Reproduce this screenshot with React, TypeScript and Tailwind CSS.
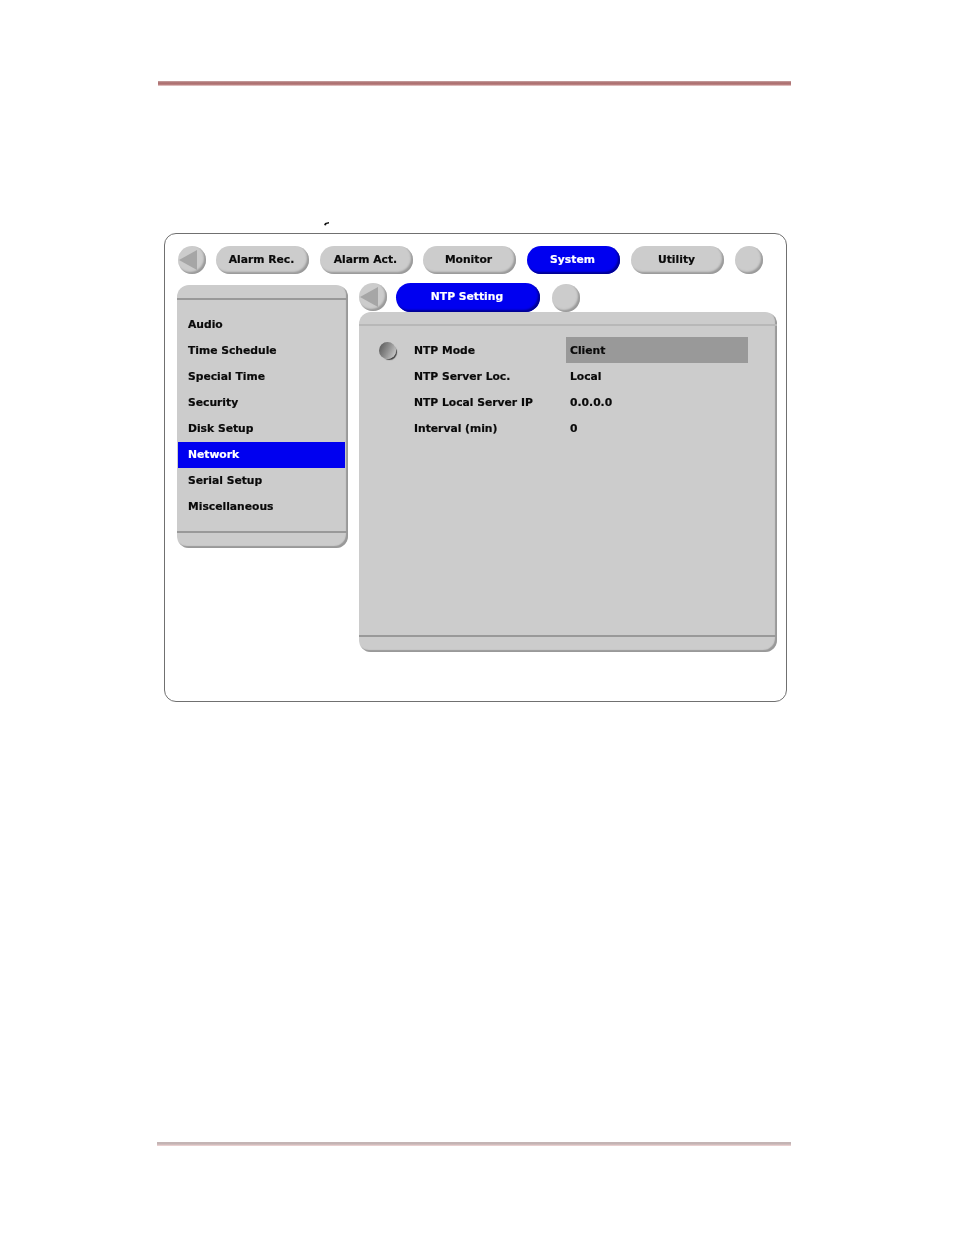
const FONT = "font-['DejaVu_Sans','Liberation_Sans',sans-serif]";

const topTabs = [
  { label: 'Alarm Rec.', gap: 'ml-[10px]' },
  { label: 'Alarm Act.', gap: 'ml-[11px]' },
  { label: 'Monitor', gap: 'ml-[10px]' },
  { label: 'System', gap: 'ml-[11px]', active: true },
  { label: 'Utility', gap: 'ml-[11px]' },
];

const menu = ['Audio', 'Time Schedule', 'Special Time', 'Security', 'Disk Setup', 'Network', 'Serial Setup', 'Miscellaneous'];

const settings = [
  { name: 'NTP Mode', value: 'Client', selected: true },
  { name: 'NTP Server Loc.', value: 'Local' },
  { name: 'NTP Local Server IP', value: '0.0.0.0' },
  { name: 'Interval (min)', value: '0' },
];

function RoundButton({ arrow, className = '' }: { arrow?: boolean; className?: string }) {
  return (
    <div className={`w-[28px] h-[28px] shrink-0 rounded-full bg-[#cccccc] shadow-[inset_-2px_-2px_2px_#999999] flex items-center justify-center ${className}`}>
      {arrow && (
        <svg width="28" height="28" viewBox="0 0 28 28">
          <polygon points="1,14 19,4 19,24" fill="#a6a6a6" />
        </svg>
      )}
    </div>
  );
}

function Pill({ label, active, className = '' }: { label: string; active?: boolean; className?: string }) {
  return (
    <div
      className={`h-[28px] shrink-0 rounded-full flex items-center justify-center pr-[2px] text-[10.75px] font-bold [-webkit-text-stroke:0.2px] ${
        active
          ? 'bg-[#0000f0] text-white shadow-[inset_-2px_-2px_2px_#000090]'
          : 'bg-[#cccccc] text-[#0a0a0a] shadow-[inset_-2px_-2px_2px_#999999]'
      } ${className}`}
    >
      {label}
    </div>
  );
}

export default function App() {
  return (
    <div className={`w-[954px] h-[1235px] bg-white overflow-hidden flex flex-col ${FONT}`}>
      {/* Header rule */}
      <div className="ml-[158px] mt-[81px] w-[633px] h-[5px] bg-[linear-gradient(#c9a3a3,#a86a6a_40%,#b98080_70%,#f0d8d8)]" />

      {/* Stray mark above the figure */}
      <svg className="ml-[324px] mt-[136px] shrink-0" width="6" height="5" viewBox="0 0 6 5">
        <path d="M0 3 L1 1 L5 0 L5 1.5 L2.5 2 L2 3.5 Z" fill="#111" />
      </svg>

      {/* Figure */}
      <div className="ml-[164px] mt-[6px] w-[623px] h-[469px] rounded-[12px] border border-[#707070] pl-[13px] pt-[12px] blur-[0.35px]">
        <div className="flex">
          <RoundButton arrow />
          {topTabs.map(t => (
            <Pill key={t.label} label={t.label} active={t.active} className={`w-[93px] ${t.gap}`} />
          ))}
          <RoundButton className="ml-[11px]" />
        </div>

        <div className="flex mt-[9px]">
          {/* Side menu */}
          <div className="-ml-[1px] mt-[2px] w-[171px] h-[263px] flex flex-col rounded-[12px] bg-[#cccccc] shadow-[inset_-2px_-2px_1px_#999999]">
            <div className="h-[13px] shrink-0 border-b-2 border-[#999999] box-content" />
            <div className="mt-[12px] flex-1">
              {menu.map(m => (
                <div
                  key={m}
                  className={`h-[26px] ml-[1px] mr-[3px] pl-[10px] flex items-center text-[10.75px] font-bold [-webkit-text-stroke:0.2px] ${
                    m === 'Network' ? 'bg-[#0000f0] text-white' : 'text-[#0a0a0a]'
                  }`}
                >
                  {m}
                </div>
              ))}
            </div>
            <div className="h-[15px] shrink-0 border-t-2 border-[#999999] box-content" />
          </div>

          {/* Setting panel */}
          <div className="ml-[11px] w-[418px]">
            <div className="flex h-[29px]">
              <RoundButton arrow />
              <Pill label="NTP Setting" active className="ml-[9px] w-[144px] h-[29px]" />
              <RoundButton className="ml-[12px] mt-[1px]" />
            </div>
            <div className="h-[340px] flex flex-col rounded-[12px] bg-[#cccccc] shadow-[inset_-2px_-2px_1px_#999999]">
              <div className="h-[12px] shrink-0 border-b-2 border-[#b8b8b8] box-content" />
              <div className="flex-1 pt-[11px] pl-[20px]">
                {settings.map(s => (
                  <div key={s.name} className="flex h-[26px] items-center text-[10.75px] font-bold text-[#0a0a0a] [-webkit-text-stroke:0.2px]">
                    <div className="w-[35px] shrink-0 flex">
                      {s.selected && (
                        <div className="w-[17px] h-[17px] mt-[1px] rounded-full bg-[linear-gradient(115deg,#555555,#8f8f8f_50%,#d4d4d4)] shadow-[2px_2px_1px_-1px_#444444]" />
                      )}
                    </div>
                    <div className="w-[152px] shrink-0 pt-[2px]">{s.name}</div>
                    <div className={`w-[182px] h-[26px] pl-[4px] pt-[2px] flex items-center ${s.selected ? 'bg-[#999999]' : ''}`}>{s.value}</div>
                  </div>
                ))}
              </div>
              <div className="h-[15px] shrink-0 border-t-2 border-[#999999] box-content" />
            </div>
          </div>
        </div>
      </div>

      {/* Footer rule */}
      <div className="ml-[157px] mt-[440px] w-[634px] h-[4px] bg-[linear-gradient(#c4b4b4,#c4b4b4_50%,#f5d8d8)]" />
    </div>
  );
}
